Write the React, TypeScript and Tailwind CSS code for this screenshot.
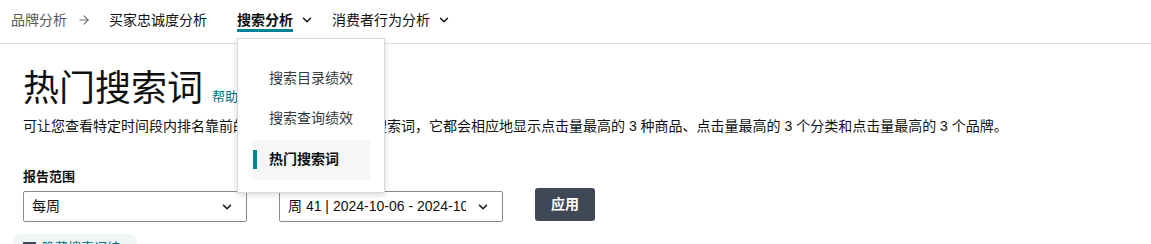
import React from 'react';
import { ChevronDown, ArrowRight } from 'lucide-react';

const font = { fontFamily: '"Liberation Sans", Arial, "Noto Sans CJK SC", sans-serif' };

const NavBar: React.FC = () => (
  <div className="relative h-[44px] border-b border-[#dddddd] flex items-center pb-[3px] text-[14px]">
    <span className="ml-[11px] text-[#565959]">品牌分析</span>
    <ArrowRight size={14} strokeWidth={2} className="ml-[10px] text-[#6f7373]" />
    <span className="ml-[18px] text-[#0f1111]">买家忠诚度分析</span>
    <div className="relative ml-[30px] flex items-center">
      <span className="font-bold text-[#0f1111] border-b-[3px] border-[#008296] leading-[17px] mt-[3px]">搜索分析</span>
      <ChevronDown size={14} strokeWidth={2.5} className="ml-[7px] text-[#0f1111]" />
      <div className="absolute left-0 top-[29px] z-10 w-[148px] bg-white border border-[#d5d9d9] shadow-[0_2px_6px_rgba(0,0,0,0.15)] pt-[26px] pb-[12px] pl-[15px] pr-[14px]">
        <div className="pl-[16px] h-[28px] flex items-center text-[#333a3a]">搜索目录绩效</div>
        <div className="pl-[16px] mt-[12px] h-[28px] flex items-center text-[#333a3a]">搜索查询绩效</div>
        <div className="mt-[7px] h-[40px] bg-[#f5f6f6] flex items-center">
          <span className="w-[4px] h-[19px] bg-[#008296]" />
          <span className="ml-[12px] font-bold text-[#0f1111]">热门搜索词</span>
        </div>
      </div>
    </div>
    <span className="ml-[18px] text-[#0f1111]">消费者行为分析</span>
    <ChevronDown size={14} strokeWidth={2.5} className="ml-[7px] text-[#0f1111]" />
  </div>
);

const Select: React.FC<{ value: string; className?: string }> = ({ value, className }) => (
  <div className={`w-[224px] h-[31px] border border-[#888c8c] rounded-[2px] flex items-center pl-[8px] pr-[12px] bg-white ${className ?? ''}`}>
    <span className="flex-1 whitespace-nowrap overflow-hidden text-[14px] text-[#0f1111]">{value}</span>
    <ChevronDown size={14} strokeWidth={2.5} className="ml-[10px] text-[#0f1111] shrink-0" />
  </div>
);

export default function App() {
  return (
    <div className="w-[1151px] h-[244px] overflow-hidden bg-white" style={font}>
      <NavBar />
      <div className="pl-[23px]">
        <div className="flex items-end mt-[24px]">
          <h1 className="text-[36px] leading-[42px] text-[#0f1111]">热门搜索词</h1>
          <span className="ml-[9px] mb-[4px] text-[13px] text-[#007185]">帮助</span>
        </div>
        <p className="mt-[7px] text-[14px] leading-[18px] text-[#0f1111] whitespace-nowrap">
          可让您查看特定时间段内排名靠前的搜索词。对于每一个搜索词，它都会相应地显示点击量最高的 3 种商品、点击量最高的 3 个分类和点击量最高的 3 个品牌。
        </p>
        <div className="mt-[33px] text-[13px] font-bold text-[#0f1111] leading-[18px]">报告范围</div>
        <div className="mt-[5px] flex items-start">
          <Select value="每周" />
          <Select value="周 41 | 2024-10-06 - 2024-10-12" className="ml-[32px]" />
          <button className="ml-[32px] h-[33px] w-[60px] -mt-[3px] bg-[#3f4856] text-white text-[14px] font-bold rounded-[3px]">应用</button>
        </div>
      </div>
      <div className="ml-[13px] mt-[12px] w-[124px] h-[30px] rounded-[8px] bg-[#f0f5f5] flex items-start pt-[7px] px-[10px] text-[13px] leading-[14px] text-[#0f1111]">
        <span className="w-[14px] h-[12px] bg-[#3f4856] mr-[6px] mt-[1px]" />
        <span className="text-[#007185]">隐藏搜索词结果</span>
      </div>
    </div>
  );
}
